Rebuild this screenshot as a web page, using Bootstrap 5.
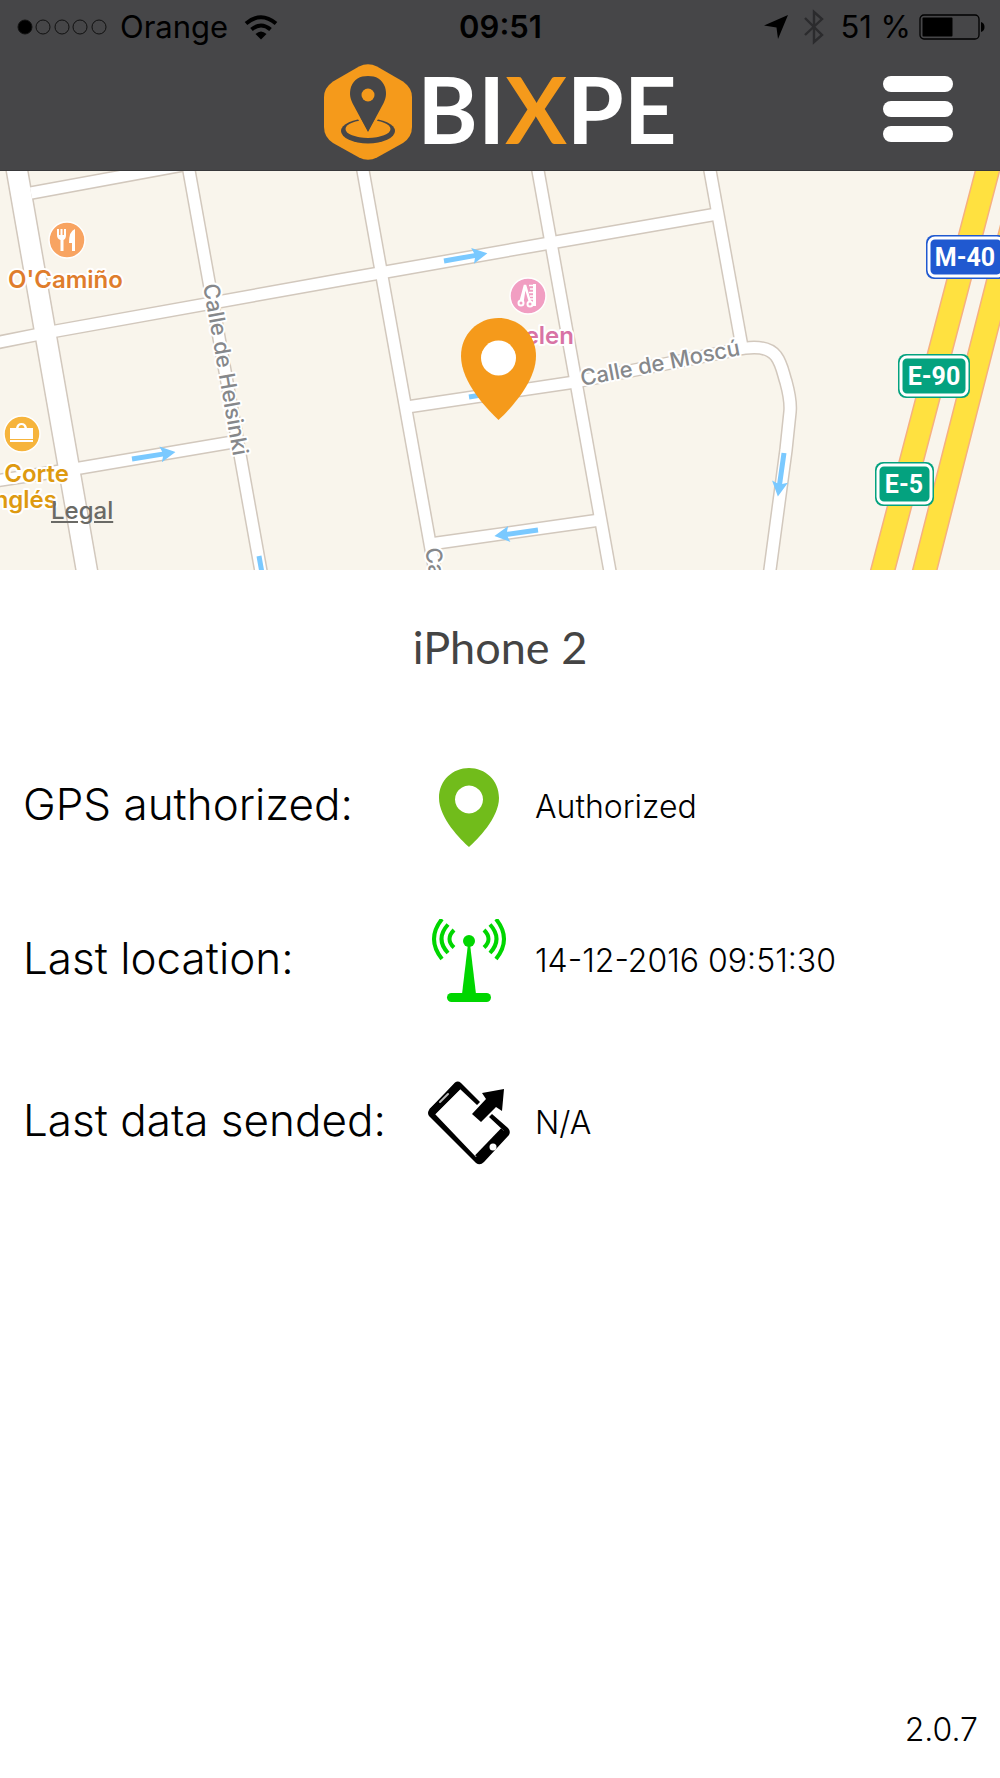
<!DOCTYPE html>
<html lang="en">
<head>
<meta charset="utf-8">
<meta name="viewport" content="width=device-width, initial-scale=1">
<title>Bixpe</title>
<link href="https://cdn.jsdelivr.net/npm/bootstrap@5.3.0/dist/css/bootstrap.min.css" rel="stylesheet">
<style>
  body { font-family: Inter, "Noto Sans", sans-serif; color: #000; background: #fff; }
  .app-top { background: #464648; border-bottom: 1px solid #38383a; }
  .status-bar { height: 54px; padding: 0 15px 0 16px; font-size: 31px; line-height: 54px; }
  .status-side { flex: 1 1 0; }
  .brand-bar { height: 116px; padding: 0 47px; }
  .brand-name { font: 700 92px/96px Lato, sans-serif; color: #fff; margin-bottom: 6px; }
  .brand-x { color: #f59a1b; }
  .menu-btn { width: 70px; gap: 9px; margin-bottom: 6px; }
  .menu-btn span { height: 16px; border-radius: 8px; background: #fff; }
  .map-view { height: 399px; background: #f9f5ec; }
  .legal-link { left: 51px; top: 325px; font-size: 24px; line-height: 30px; font-weight: 500; color: #6a6a66; }
  .poi { font: 600 24px Inter, sans-serif; }
  .street { font: 500 22px Inter, sans-serif; fill: #86888b; }
  .halo { paint-order: stroke; stroke: #fff; stroke-width: 4px; stroke-linejoin: round; }
  .shield { font: 700 25px Roboto, sans-serif; fill: #fff; text-anchor: middle; }
  .device-name { font: 400 45px/54px Lato, sans-serif; color: #444; padding-top: 50px; }
  .info-list { padding: 91px 24px 0 23px; }
  .info-item { min-height: 84px; margin-bottom: 70px; }
  .info-item + .info-item + .info-item { margin-top: 78px; }
  .info-label { width: 404px; font-size: 44px; line-height: 52px; font-weight: 350; margin-bottom: 6px; }
  .info-value { font-size: 32px; line-height: 40px; font-weight: 350; }
  .app-version { font-size: 32px; line-height: 40px; font-weight: 350; padding: 0 22px 28px; }
</style>
</head>
<body class="d-flex flex-column min-vh-100">

<header class="app-top">
  <div class="status-bar d-flex align-items-center">
    <div class="status-side d-flex align-items-center">
      <svg width="92" height="18" viewBox="0 0 92 18" aria-hidden="true" fill="none" stroke="#111" stroke-width="1">
        <circle cx="9" cy="9" r="7" fill="#000"/><circle cx="27" cy="9" r="7"/><circle cx="46" cy="9" r="7"/><circle cx="64" cy="9" r="7"/><circle cx="83" cy="9" r="7"/>
      </svg>
      <span class="ms-2 ps-1">Orange</span>
      <svg class="ms-3" width="34" height="26" viewBox="0 0 34 26" aria-hidden="true" fill="none" stroke="#000" stroke-width="4">
        <path d="M2 9.500Q17-3 32 9.500"/><path d="M7.500 15.500Q17 7.500 26.500 15.500"/><path d="M11.500 20Q17 15 22.500 20L17 25.500Z" fill="#000" stroke="none"/>
      </svg>
    </div>
    <strong class="fw-semibold">09:51</strong>
    <div class="status-side d-flex align-items-center justify-content-end">
      <svg width="24" height="24" viewBox="0 0 24 24" aria-hidden="true"><path d="M24 0L14 24L12.500 12.500L0 10.500Z"/></svg>
      <svg class="ms-3" width="20" height="36" viewBox="0 0 20 36" aria-hidden="true" fill="none" stroke="#2b2b2d" stroke-width="2.400"><path d="M1 9L18 26L10 33V3L18 10L1 26"/></svg>
      <span class="ms-3">51&nbsp;%</span>
      <svg class="ms-2" width="66" height="26" viewBox="0 0 66 26" aria-hidden="true"><rect x="1" y="1" width="59" height="24" rx="4" fill="none" stroke="#000" stroke-width="1.300"/><rect x="3.500" y="3.500" width="30" height="19" rx="1"/><path d="M62 8Q65.500 9 65.500 13T62 18Z"/></svg>
    </div>
  </div>
  <div class="brand-bar d-flex align-items-center">
    <div class="status-side"></div>
    <div class="d-flex align-items-center">
      <svg width="90" height="96" viewBox="0 0 90 96" aria-hidden="true">
        <path fill="#f59a1b" d="M36 2.500Q45-2 54 2.500L80 17.500Q89 24 89 33V63Q89 73 80 79L54 93.500Q45 98 36 93.500L10 79Q1 73 1 63V33Q1 24 10 17.500Z"/>
        <ellipse cx="45" cy="67" rx="27" ry="12.500" fill="#464648"/><ellipse cx="45" cy="65" rx="22.500" ry="9" fill="#f59a1b"/>
        <path d="M35 52L45 70L55 52Z" fill="#464648" stroke="#f59a1b" stroke-width="3"/>
        <path d="M45 68L31 42C27 35 26 30 28 23C31 15 37 12 45 12S59 15 62 23C64 30 63 35 59 42Z" fill="#464648"/>
        <circle cx="45" cy="31" r="6.500" fill="#f59a1b"/>
      </svg>
      <span class="brand-name ms-1">BI<span class="brand-x">X</span>PE</span>
    </div>
    <div class="status-side d-flex justify-content-end">
      <button type="button" class="menu-btn btn p-0 border-0 d-flex flex-column" aria-label="Menu"><span class="w-100"></span><span class="w-100"></span><span class="w-100"></span></button>
    </div>
  </div>
</header>

<main class="flex-grow-1">
  <section class="map-view position-relative overflow-hidden" aria-label="Map">
    <svg class="d-block w-100 h-100" viewBox="0 171 1000 399" preserveAspectRatio="xMidYMid slice">
      <defs>
        <g id="streets" fill="none" stroke-linejoin="round">
          <path d="M31 193L183 165"/>
          <path d="M188 165L262 577"/>
          <path d="M-5 343L45 333L340 280L550 243L717 214"/>
          <path d="M362 165L436 577"/>
          <path d="M537 165L611 577"/>
          <path d="M709 165L742 347"/>
          <path d="M575 382L735 350C752 346 768 346 776 356C782 364 783 373 786 382C789 393 791 402 790 412L786 450L769 577"/>
          <path d="M-5 481L80 468L233 442"/>
          <path d="M407 407L575 382"/>
          <path d="M430 544L600 520"/>
        </g>
        <path id="avenue" fill="none" d="M16 165L88 577"/>
        <path id="oneway" fill="#7ac9ff" d="M0-2.500H31L29-8L44 0L29 8L31 2.500H0Z"/>
      </defs>
      <use href="#streets" stroke="#d2c8bd" stroke-width="14"/>
      <use href="#avenue" stroke="#d2c8bd" stroke-width="23"/>
      <use href="#streets" stroke="#fff" stroke-width="11"/>
      <use href="#avenue" stroke="#fff" stroke-width="20"/>
      <g fill="none">
        <path d="M989 165L881 577M1028 165L923 577" stroke="#f6b080" stroke-width="25"/>
        <path d="M989 165L881 577M1028 165L923 577" stroke="#ffe140" stroke-width="22"/>
      </g>
      <use href="#oneway" transform="translate(132 459) rotate(-9)"/>
      <use href="#oneway" transform="translate(444 261) rotate(-10)"/>
      <use href="#oneway" transform="translate(538 530) rotate(172)"/>
      <use href="#oneway" transform="translate(784 453) rotate(98)"/>
      <use href="#oneway" transform="translate(259 556) rotate(80)"/>
      <use href="#oneway" transform="translate(469 397) rotate(-9)"/>

      <g class="street">
        <text class="halo" transform="translate(203 285) rotate(80)">Calle de Helsinki</text>
        <text class="halo" transform="translate(582 386) rotate(-11)">Calle de Moscú</text>
        <text class="halo" transform="translate(425 549) rotate(80)">Ca</text>
      </g>

      <g stroke="#fff" stroke-width="1.500">
        <circle cx="67" cy="240" r="18" fill="#f8a462"/>
        <circle cx="22" cy="434" r="18" fill="#f6b43c"/>
        <circle cx="528" cy="296" r="18" fill="#f19ec2"/>
      </g>
      <!-- fork and knife -->
      <path fill="#fff" d="M57 229h2v6h1.500v-6h2v6h1.500v-6h2v6q0 4-2.500 5v11h-3v-11q-3.500-1-3.500-5zM75 229v22h-3v-8h-3q0-12 6-14z"/>
      <!-- shopping bag -->
      <path fill="#fff" d="M10 428h6q1-5 5.500-5t5.500 5h6v11H10zm8.500 0h6q-.5-3-3-3t-3 3zM10 440h23v2H10z"/>
      <!-- scissors and comb -->
      <g fill="none" stroke="#fff" stroke-width="2"><circle cx="521" cy="303" r="2.500"/><circle cx="530" cy="304" r="2.500"/><path d="M522.500 301L525 285L530 302M525 285L521 300" stroke-width="2.500"/><path d="M534.500 284V306" stroke-width="3"/><path d="M529 285.500h5M530 289h4M529 292.500h5M530 296h4M529 299h5" stroke-width="1.500"/></g>
      <text class="poi halo" x="8" y="288" fill="#df7d2c">O'Camiño</text>
      <text class="poi halo" x="69" y="482" text-anchor="end" fill="#de9a10">Corte</text>
      <text class="poi halo" x="57" y="508" text-anchor="end" fill="#de9a10">nglés</text>
      <text class="poi halo" x="574" y="344" text-anchor="end" fill="#d873a5">elen</text>

      <g stroke-width="2">
        <g fill="#2059d0"><rect x="926" y="235" width="80" height="44" rx="8"/><rect x="929" y="238" width="74" height="38" rx="6" stroke="#fff" stroke-width="3"/></g>
        <g fill="#04a27f"><rect x="898" y="354" width="72" height="44" rx="8"/><rect x="901" y="357" width="66" height="38" rx="6" stroke="#fff" stroke-width="3"/>
        <rect x="875" y="462" width="59" height="44" rx="8"/><rect x="878" y="465" width="53" height="38" rx="6" stroke="#fff" stroke-width="3"/></g>
      </g>
      <text class="shield" x="965" y="266">M-40</text>
      <text class="shield" x="934" y="385">E-90</text>
      <text class="shield" x="904" y="493">E-5</text>

      <path fill="#f59a1b" d="M498.500 420C489 411 461 383 461 356C461 334 478 318 498.500 318S536 334 536 356C536 383 508 411 498.500 420Z"/>
      <circle cx="498.500" cy="358" r="17.500" fill="#fff"/>
    </svg>
    <a href="#legal" class="legal-link position-absolute">Legal</a>
  </section>

  <h1 class="device-name text-center mb-0">iPhone 2</h1>

  <div class="info-list">
    <div class="info-item d-flex align-items-center">
      <h2 class="info-label">GPS authorized:</h2>
      <svg width="84" height="84" viewBox="0 0 84 84" aria-hidden="true"><path fill="#71bc1b" fill-rule="evenodd" d="M42 82C34 75 12 53 12 33C12 15 26 3 42 3S72 15 72 33C72 53 50 75 42 82ZM42 20.500a14 14 0 1 0 .01 0Z"/></svg>
      <span class="info-value ms-4">Authorized</span>
    </div>
    <div class="info-item d-flex align-items-center">
      <h2 class="info-label">Last location:</h2>
      <svg width="84" height="84" viewBox="0 0 84 84" aria-hidden="true">
        <g fill="#00d600"><circle cx="42" cy="22" r="6"/><path d="M41 25h2L49 75H35Z"/><rect x="20" y="74" width="44" height="9" rx="4.500"/></g>
        <g fill="none" stroke="#00d600" stroke-width="4"><path d="M27 11Q18 20 27 28.500M21 5.500Q8 20 21 34M15 0Q-1 20 15 40"/><path d="M57 11Q66 20 57 28.500M63 5.500Q76 20 63 34M69 0Q85 20 69 40"/></g>
      </svg>
      <span class="info-value ms-4">14-12-2016 09:51:30</span>
    </div>
    <div class="info-item d-flex align-items-center mb-0">
      <h2 class="info-label">Last data sended:</h2>
      <svg width="84" height="84" viewBox="0 0 84 84" aria-hidden="true">
        <path fill-rule="evenodd" d="M28 1.500Q31-.5 34 2L53 21L50 24L33 8L8 33L49 76L77 50L62 36L65 33L81 47Q84 50 82 54L57 81Q53 85 49 82L2 35Q0 32 2 29Z"/>
        <path d="M51 77L77 50" stroke="#000" stroke-width="8"/>
        <path d="M5 31L31 5" stroke="#000" stroke-width="8"/>
        <path d="M13 21L21 13" stroke="#bbb" stroke-width="2" stroke-linecap="round"/>
        <circle cx="66" cy="66" r="3.500" fill="#fff"/>
        <path d="M45 33L59 18L55 12L77 8L75 30L69 26L54 41Z"/>
      </svg>
      <span class="info-value ms-4">N/A</span>
    </div>
  </div>
</main>

<footer class="app-version text-end">2.0.7</footer>

<script src="https://cdn.jsdelivr.net/npm/bootstrap@5.3.0/dist/js/bootstrap.bundle.min.js"></script>
</body>
</html>
